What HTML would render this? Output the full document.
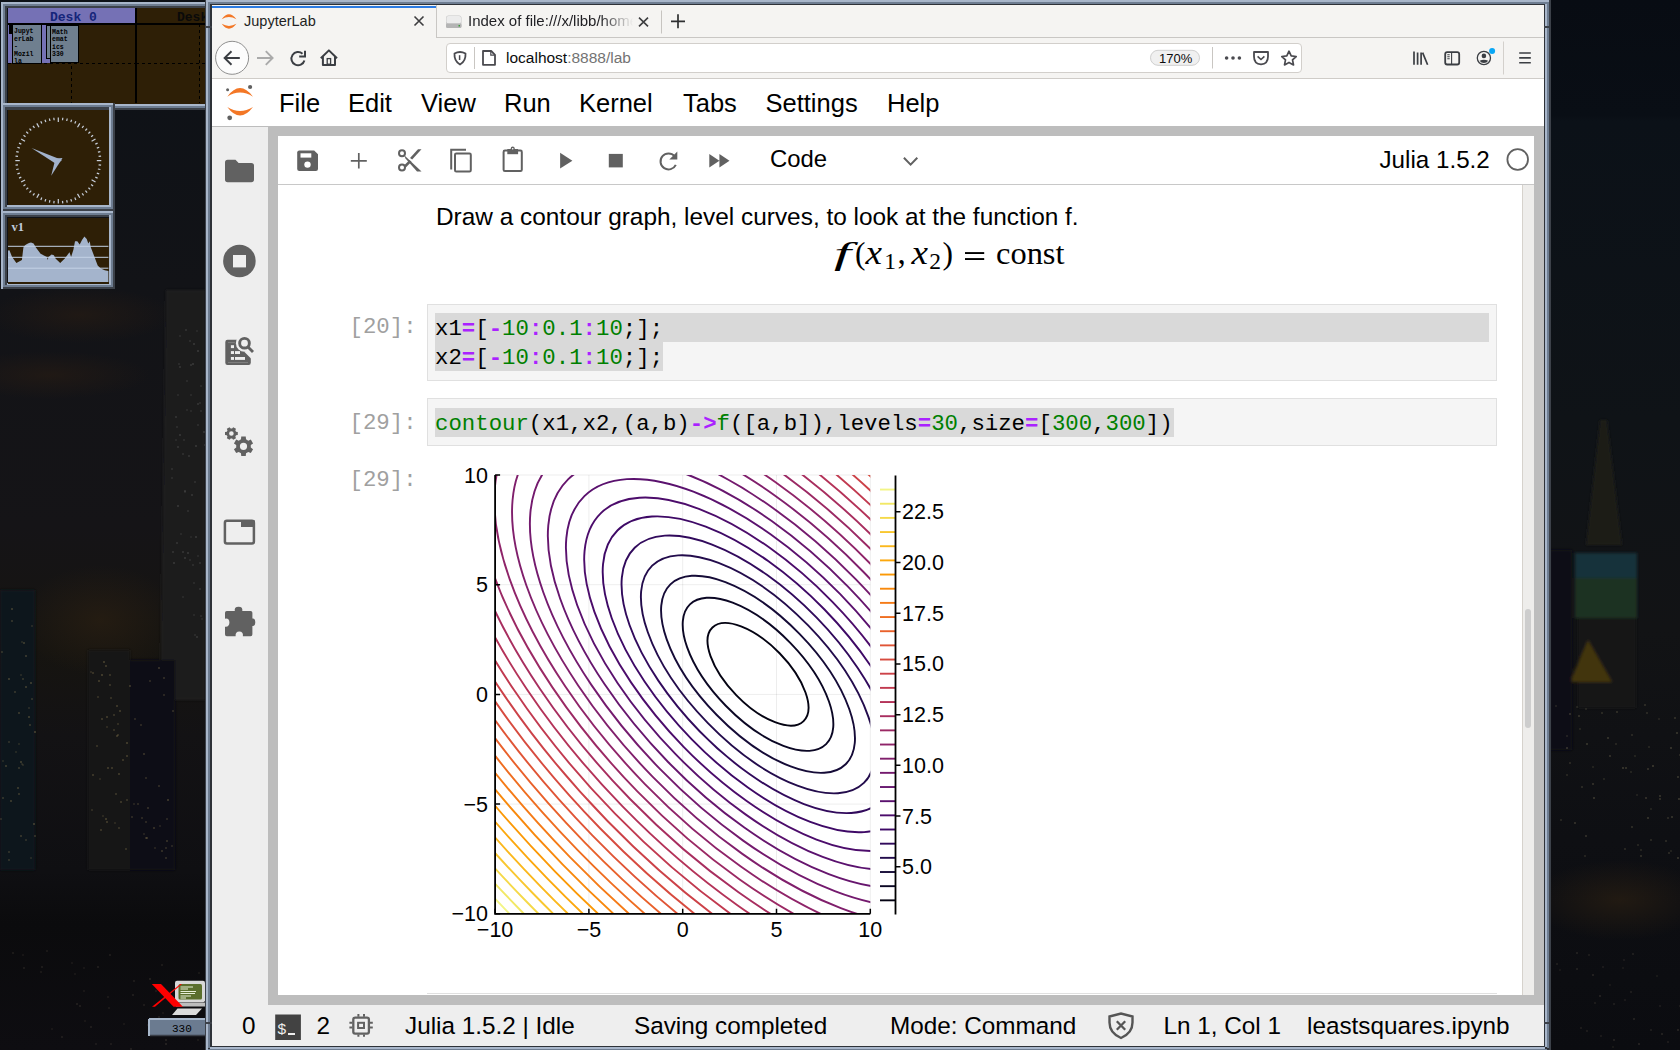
<!DOCTYPE html>
<html><head><meta charset="utf-8">
<style>
*{margin:0;padding:0;box-sizing:border-box}
html,body{width:1680px;height:1050px;overflow:hidden}
body{position:relative;background:#0b1016;font-family:"Liberation Sans",sans-serif}
.a{position:absolute}
.mono{font-family:"Liberation Mono",monospace}
</style></head><body>
<!-- desktop background -->
<svg class="a" style="left:0;top:0" width="1680" height="1050" viewBox="0 0 1680 1050">
 <defs>
  <linearGradient id="gl" x1="0" y1="0" x2="0" y2="1">
   <stop offset="0" stop-color="#0d1117"/><stop offset="0.27" stop-color="#121317"/><stop offset="0.5" stop-color="#151417"/>
   <stop offset="0.62" stop-color="#161410"/><stop offset="0.7" stop-color="#131214"/><stop offset="0.83" stop-color="#0f0f12"/><stop offset="0.88" stop-color="#0b0b0d"/><stop offset="1" stop-color="#0e0d11"/>
  </linearGradient>
  <linearGradient id="gr" x1="0" y1="0" x2="0" y2="1">
   <stop offset="0" stop-color="#080c13"/><stop offset="0.11" stop-color="#090e15"/><stop offset="0.115" stop-color="#0b1118"/>
   <stop offset="0.4" stop-color="#0f1317"/><stop offset="0.6" stop-color="#121315"/><stop offset="0.8" stop-color="#0e0f13"/><stop offset="1" stop-color="#0b0c10"/>
  </linearGradient>
  <filter id="bl" x="-50%" y="-50%" width="200%" height="200%"><feGaussianBlur stdDeviation="10"/></filter>
  <filter id="bl2" x="-50%" y="-50%" width="200%" height="200%"><feGaussianBlur stdDeviation="1.5"/></filter>
 </defs>
 <rect x="0" y="0" width="210" height="1050" fill="url(#gl)"/>
 <rect x="1545" y="0" width="135" height="1050" fill="url(#gr)"/>
 <defs>
  <radialGradient id="rb1"><stop offset="0" stop-color="#231a14" stop-opacity="0.8"/><stop offset="1" stop-color="#231a14" stop-opacity="0"/></radialGradient>
  <radialGradient id="rb2"><stop offset="0" stop-color="#2a1f12" stop-opacity="0.7"/><stop offset="1" stop-color="#2a1f12" stop-opacity="0"/></radialGradient>
 </defs>
 <ellipse cx="80" cy="315" rx="95" ry="28" fill="url(#rb1)"/>
 <ellipse cx="50" cy="375" rx="100" ry="24" fill="url(#rb1)"/>
 <ellipse cx="100" cy="620" rx="80" ry="55" fill="url(#rb2)"/>
 <ellipse cx="1620" cy="900" rx="90" ry="40" fill="url(#rb2)"/>
 <g filter="url(#bl2)">
  <path d="M166 290L205 290L205 700L160 700Z" fill="#1c1c1f"/>
  <rect x="0" y="590" width="35" height="280" fill="#10121a"/>
  <rect x="88" y="650" width="42" height="220" fill="#131317"/>
  <rect x="130" y="660" width="45" height="210" fill="#111116"/>
  <path d="M1600 420L1607 420L1622 545L1586 545Z" fill="#1b1c19"/>
  <rect x="1575" y="553" width="62" height="25" fill="#15323b"/>
  <rect x="1575" y="578" width="62" height="40" fill="#1a3020"/>
  <rect x="1578" y="618" width="58" height="90" fill="#141415"/>
  <path d="M1588 640L1612 682H1570Z" fill="#43360f"/>
  <rect x="1550" y="550" width="22" height="200" fill="#0b0d14"/>
 </g>
 <rect x="8" y="741" width="2" height="2" fill="#8a7a50" opacity="0.24"/>
 <rect x="21" y="763" width="2" height="2" fill="#8a7a50" opacity="0.19"/>
 <rect x="0" y="818" width="2" height="2" fill="#8a7a50" opacity="0.22"/>
 <rect x="8" y="859" width="2" height="2" fill="#8a7a50" opacity="0.26"/>
 <rect x="29" y="724" width="2" height="2" fill="#8a7a50" opacity="0.29"/>
 <rect x="5" y="765" width="2" height="2" fill="#8a7a50" opacity="0.33"/>
 <rect x="18" y="793" width="2" height="2" fill="#8a7a50" opacity="0.29"/>
 <rect x="2" y="797" width="2" height="2" fill="#8a7a50" opacity="0.28"/>
 <rect x="11" y="608" width="2" height="2" fill="#8a7a50" opacity="0.33"/>
 <rect x="17" y="787" width="2" height="2" fill="#8a7a50" opacity="0.33"/>
 <rect x="25" y="839" width="2" height="2" fill="#8a7a50" opacity="0.24"/>
 <rect x="28" y="716" width="2" height="2" fill="#8a7a50" opacity="0.34"/>
 <rect x="31" y="625" width="2" height="2" fill="#8a7a50" opacity="0.20"/>
 <rect x="8" y="851" width="2" height="2" fill="#8a7a50" opacity="0.25"/>
 <rect x="22" y="678" width="2" height="2" fill="#8a7a50" opacity="0.26"/>
 <rect x="14" y="691" width="2" height="2" fill="#8a7a50" opacity="0.28"/>
 <rect x="20" y="835" width="2" height="2" fill="#8a7a50" opacity="0.29"/>
 <rect x="33" y="823" width="2" height="2" fill="#8a7a50" opacity="0.35"/>
 <rect x="23" y="642" width="2" height="2" fill="#8a7a50" opacity="0.33"/>
 <rect x="34" y="835" width="2" height="2" fill="#8a7a50" opacity="0.27"/>
 <rect x="25" y="655" width="2" height="2" fill="#8a7a50" opacity="0.32"/>
 <rect x="20" y="674" width="2" height="2" fill="#8a7a50" opacity="0.19"/>
 <rect x="30" y="857" width="2" height="2" fill="#8a7a50" opacity="0.19"/>
 <rect x="28" y="707" width="2" height="2" fill="#8a7a50" opacity="0.20"/>
 <rect x="10" y="800" width="2" height="2" fill="#8a7a50" opacity="0.33"/>
 <rect x="2" y="760" width="2" height="2" fill="#8a7a50" opacity="0.18"/>
 <rect x="25" y="686" width="2" height="2" fill="#8a7a50" opacity="0.33"/>
 <rect x="34" y="731" width="2" height="2" fill="#8a7a50" opacity="0.35"/>
 <rect x="11" y="620" width="2" height="2" fill="#8a7a50" opacity="0.28"/>
 <rect x="1" y="651" width="2" height="2" fill="#8a7a50" opacity="0.25"/>
 <rect x="21" y="641" width="2" height="2" fill="#8a7a50" opacity="0.18"/>
 <rect x="30" y="682" width="2" height="2" fill="#8a7a50" opacity="0.34"/>
 <rect x="31" y="698" width="2" height="2" fill="#8a7a50" opacity="0.26"/>
 <rect x="18" y="767" width="2" height="2" fill="#8a7a50" opacity="0.28"/>
 <rect x="20" y="761" width="2" height="2" fill="#8a7a50" opacity="0.34"/>
 <rect x="18" y="712" width="2" height="2" fill="#8a7a50" opacity="0.30"/>
 <rect x="8" y="678" width="2" height="2" fill="#8a7a50" opacity="0.35"/>
 <rect x="18" y="743" width="2" height="2" fill="#8a7a50" opacity="0.18"/>
 <rect x="15" y="751" width="2" height="2" fill="#8a7a50" opacity="0.18"/>
 <rect x="22" y="764" width="2" height="2" fill="#8a7a50" opacity="0.19"/>
 <rect x="143" y="753" width="2" height="2" fill="#8a7a50" opacity="0.29"/>
 <rect x="120" y="801" width="2" height="2" fill="#8a7a50" opacity="0.30"/>
 <rect x="92" y="672" width="2" height="2" fill="#8a7a50" opacity="0.29"/>
 <rect x="172" y="710" width="2" height="2" fill="#8a7a50" opacity="0.25"/>
 <rect x="140" y="724" width="2" height="2" fill="#8a7a50" opacity="0.24"/>
 <rect x="117" y="734" width="2" height="2" fill="#8a7a50" opacity="0.28"/>
 <rect x="116" y="735" width="2" height="2" fill="#8a7a50" opacity="0.31"/>
 <rect x="92" y="774" width="2" height="2" fill="#8a7a50" opacity="0.30"/>
 <rect x="116" y="705" width="2" height="2" fill="#8a7a50" opacity="0.32"/>
 <rect x="110" y="697" width="2" height="2" fill="#8a7a50" opacity="0.25"/>
 <rect x="149" y="680" width="2" height="2" fill="#8a7a50" opacity="0.23"/>
 <rect x="118" y="827" width="2" height="2" fill="#8a7a50" opacity="0.25"/>
 <rect x="163" y="694" width="2" height="2" fill="#8a7a50" opacity="0.23"/>
 <rect x="145" y="837" width="2" height="2" fill="#8a7a50" opacity="0.25"/>
 <rect x="109" y="684" width="2" height="2" fill="#8a7a50" opacity="0.27"/>
 <rect x="106" y="821" width="2" height="2" fill="#8a7a50" opacity="0.32"/>
 <rect x="106" y="716" width="2" height="2" fill="#8a7a50" opacity="0.32"/>
 <rect x="145" y="821" width="2" height="2" fill="#8a7a50" opacity="0.24"/>
 <rect x="101" y="718" width="2" height="2" fill="#8a7a50" opacity="0.31"/>
 <rect x="113" y="729" width="2" height="2" fill="#8a7a50" opacity="0.25"/>
 <rect x="126" y="742" width="2" height="2" fill="#8a7a50" opacity="0.34"/>
 <rect x="103" y="661" width="2" height="2" fill="#8a7a50" opacity="0.34"/>
 <rect x="165" y="857" width="2" height="2" fill="#8a7a50" opacity="0.25"/>
 <rect x="171" y="845" width="2" height="2" fill="#8a7a50" opacity="0.21"/>
 <rect x="153" y="827" width="2" height="2" fill="#8a7a50" opacity="0.29"/>
 <rect x="134" y="718" width="2" height="2" fill="#8a7a50" opacity="0.23"/>
 <rect x="109" y="674" width="2" height="2" fill="#8a7a50" opacity="0.28"/>
 <rect x="114" y="822" width="2" height="2" fill="#8a7a50" opacity="0.18"/>
 <rect x="167" y="799" width="2" height="2" fill="#8a7a50" opacity="0.34"/>
 <rect x="166" y="840" width="2" height="2" fill="#8a7a50" opacity="0.28"/>
 <rect x="91" y="809" width="2" height="2" fill="#8a7a50" opacity="0.21"/>
 <rect x="115" y="793" width="2" height="2" fill="#8a7a50" opacity="0.27"/>
 <rect x="125" y="848" width="2" height="2" fill="#8a7a50" opacity="0.28"/>
 <rect x="119" y="710" width="2" height="2" fill="#8a7a50" opacity="0.33"/>
 <rect x="131" y="816" width="2" height="2" fill="#8a7a50" opacity="0.24"/>
 <rect x="107" y="767" width="2" height="2" fill="#8a7a50" opacity="0.32"/>
 <rect x="105" y="818" width="2" height="2" fill="#8a7a50" opacity="0.34"/>
 <rect x="159" y="825" width="2" height="2" fill="#8a7a50" opacity="0.18"/>
 <rect x="143" y="833" width="2" height="2" fill="#8a7a50" opacity="0.18"/>
 <rect x="113" y="714" width="2" height="2" fill="#8a7a50" opacity="0.27"/>
 <rect x="126" y="755" width="2" height="2" fill="#8a7a50" opacity="0.31"/>
 <rect x="90" y="671" width="2" height="2" fill="#8a7a50" opacity="0.20"/>
 <rect x="101" y="674" width="2" height="2" fill="#8a7a50" opacity="0.35"/>
 <rect x="163" y="677" width="2" height="2" fill="#8a7a50" opacity="0.26"/>
 <rect x="117" y="723" width="2" height="2" fill="#8a7a50" opacity="0.24"/>
 <rect x="145" y="777" width="2" height="2" fill="#8a7a50" opacity="0.24"/>
 <rect x="106" y="726" width="2" height="2" fill="#8a7a50" opacity="0.20"/>
 <rect x="137" y="803" width="2" height="2" fill="#8a7a50" opacity="0.24"/>
 <rect x="97" y="696" width="2" height="2" fill="#8a7a50" opacity="0.24"/>
 <rect x="141" y="817" width="2" height="2" fill="#8a7a50" opacity="0.24"/>
 <rect x="158" y="785" width="2" height="2" fill="#8a7a50" opacity="0.25"/>
 <rect x="122" y="759" width="2" height="2" fill="#8a7a50" opacity="0.30"/>
 <rect x="126" y="799" width="2" height="2" fill="#8a7a50" opacity="0.26"/>
 <rect x="111" y="767" width="2" height="2" fill="#8a7a50" opacity="0.30"/>
 <rect x="96" y="745" width="2" height="2" fill="#8a7a50" opacity="0.25"/>
 <rect x="165" y="847" width="2" height="2" fill="#8a7a50" opacity="0.24"/>
 <rect x="166" y="818" width="2" height="2" fill="#8a7a50" opacity="0.22"/>
 <rect x="129" y="685" width="2" height="2" fill="#8a7a50" opacity="0.32"/>
 <rect x="146" y="837" width="2" height="2" fill="#8a7a50" opacity="0.31"/>
 <rect x="147" y="807" width="2" height="2" fill="#8a7a50" opacity="0.27"/>
 <rect x="99" y="778" width="2" height="2" fill="#8a7a50" opacity="0.18"/>
 <rect x="102" y="815" width="2" height="2" fill="#8a7a50" opacity="0.18"/>
 <rect x="98" y="680" width="2" height="2" fill="#8a7a50" opacity="0.33"/>
 <rect x="105" y="665" width="2" height="2" fill="#8a7a50" opacity="0.32"/>
 <rect x="100" y="829" width="2" height="2" fill="#8a7a50" opacity="0.29"/>
 <rect x="161" y="850" width="2" height="2" fill="#8a7a50" opacity="0.28"/>
 <rect x="158" y="667" width="2" height="2" fill="#8a7a50" opacity="0.31"/>
 <rect x="133" y="803" width="2" height="2" fill="#8a7a50" opacity="0.19"/>
 <rect x="154" y="847" width="2" height="2" fill="#8a7a50" opacity="0.19"/>
 <rect x="118" y="773" width="2" height="2" fill="#8a7a50" opacity="0.32"/>
 <rect x="178" y="363" width="2" height="2" fill="#6a6a6a" opacity="0.19"/>
 <rect x="192" y="564" width="2" height="2" fill="#6a6a6a" opacity="0.21"/>
 <rect x="183" y="439" width="2" height="2" fill="#6a6a6a" opacity="0.20"/>
 <rect x="185" y="329" width="2" height="2" fill="#6a6a6a" opacity="0.23"/>
 <rect x="204" y="444" width="2" height="2" fill="#6a6a6a" opacity="0.26"/>
 <rect x="176" y="542" width="2" height="2" fill="#6a6a6a" opacity="0.26"/>
 <rect x="194" y="481" width="2" height="2" fill="#6a6a6a" opacity="0.22"/>
 <rect x="193" y="614" width="2" height="2" fill="#6a6a6a" opacity="0.17"/>
 <rect x="173" y="562" width="2" height="2" fill="#6a6a6a" opacity="0.29"/>
 <rect x="188" y="455" width="2" height="2" fill="#6a6a6a" opacity="0.26"/>
 <rect x="177" y="394" width="2" height="2" fill="#6a6a6a" opacity="0.18"/>
 <rect x="190" y="410" width="2" height="2" fill="#6a6a6a" opacity="0.18"/>
 <rect x="194" y="634" width="2" height="2" fill="#6a6a6a" opacity="0.19"/>
 <rect x="195" y="445" width="2" height="2" fill="#6a6a6a" opacity="0.28"/>
 <rect x="190" y="394" width="2" height="2" fill="#6a6a6a" opacity="0.18"/>
 <rect x="171" y="468" width="2" height="2" fill="#6a6a6a" opacity="0.21"/>
 <rect x="176" y="426" width="2" height="2" fill="#6a6a6a" opacity="0.20"/>
 <rect x="197" y="350" width="2" height="2" fill="#6a6a6a" opacity="0.30"/>
 <rect x="187" y="510" width="2" height="2" fill="#6a6a6a" opacity="0.22"/>
 <rect x="199" y="588" width="2" height="2" fill="#6a6a6a" opacity="0.23"/>
 <rect x="187" y="552" width="2" height="2" fill="#6a6a6a" opacity="0.28"/>
 <rect x="184" y="557" width="2" height="2" fill="#6a6a6a" opacity="0.29"/>
 <rect x="186" y="380" width="2" height="2" fill="#6a6a6a" opacity="0.19"/>
 <rect x="195" y="536" width="2" height="2" fill="#6a6a6a" opacity="0.29"/>
 <rect x="200" y="385" width="2" height="2" fill="#6a6a6a" opacity="0.18"/>
 <rect x="179" y="366" width="2" height="2" fill="#6a6a6a" opacity="0.26"/>
 <rect x="200" y="615" width="2" height="2" fill="#6a6a6a" opacity="0.19"/>
 <rect x="200" y="410" width="2" height="2" fill="#6a6a6a" opacity="0.21"/>
 <rect x="196" y="330" width="2" height="2" fill="#6a6a6a" opacity="0.16"/>
 <rect x="199" y="402" width="2" height="2" fill="#6a6a6a" opacity="0.20"/>
 <rect x="190" y="536" width="2" height="2" fill="#6a6a6a" opacity="0.15"/>
 <rect x="182" y="453" width="2" height="2" fill="#6a6a6a" opacity="0.22"/>
 <rect x="177" y="505" width="2" height="2" fill="#6a6a6a" opacity="0.29"/>
 <rect x="184" y="491" width="2" height="2" fill="#6a6a6a" opacity="0.17"/>
 <rect x="180" y="533" width="2" height="2" fill="#6a6a6a" opacity="0.17"/>
 <rect x="201" y="618" width="2" height="2" fill="#6a6a6a" opacity="0.16"/>
 <rect x="203" y="431" width="2" height="2" fill="#6a6a6a" opacity="0.27"/>
 <rect x="197" y="403" width="2" height="2" fill="#6a6a6a" opacity="0.25"/>
 <rect x="193" y="582" width="2" height="2" fill="#6a6a6a" opacity="0.19"/>
 <rect x="196" y="636" width="2" height="2" fill="#6a6a6a" opacity="0.25"/>
 <rect x="189" y="340" width="2" height="2" fill="#6a6a6a" opacity="0.22"/>
 <rect x="182" y="551" width="2" height="2" fill="#6a6a6a" opacity="0.25"/>
 <rect x="190" y="364" width="2" height="2" fill="#6a6a6a" opacity="0.25"/>
 <rect x="192" y="363" width="2" height="2" fill="#6a6a6a" opacity="0.28"/>
 <rect x="193" y="343" width="2" height="2" fill="#6a6a6a" opacity="0.29"/>
 <rect x="175" y="416" width="2" height="2" fill="#6a6a6a" opacity="0.26"/>
 <rect x="191" y="494" width="2" height="2" fill="#6a6a6a" opacity="0.25"/>
 <rect x="186" y="409" width="2" height="2" fill="#6a6a6a" opacity="0.18"/>
 <rect x="172" y="551" width="2" height="2" fill="#6a6a6a" opacity="0.26"/>
 <rect x="189" y="559" width="2" height="2" fill="#6a6a6a" opacity="0.20"/>
 <rect x="179" y="434" width="2" height="2" fill="#6a6a6a" opacity="0.28"/>
 <rect x="171" y="477" width="2" height="2" fill="#6a6a6a" opacity="0.19"/>
 <rect x="197" y="424" width="2" height="2" fill="#6a6a6a" opacity="0.20"/>
 <rect x="184" y="490" width="2" height="2" fill="#6a6a6a" opacity="0.27"/>
 <rect x="182" y="596" width="2" height="2" fill="#6a6a6a" opacity="0.17"/>
 <rect x="179" y="335" width="2" height="2" fill="#6a6a6a" opacity="0.17"/>
 <rect x="197" y="555" width="2" height="2" fill="#6a6a6a" opacity="0.18"/>
 <rect x="177" y="446" width="2" height="2" fill="#6a6a6a" opacity="0.26"/>
 <rect x="199" y="562" width="2" height="2" fill="#6a6a6a" opacity="0.24"/>
 <rect x="175" y="439" width="2" height="2" fill="#6a6a6a" opacity="0.18"/>
 <rect x="108" y="1007" width="2" height="2" fill="#6a6050" opacity="0.15"/>
 <rect x="51" y="1028" width="2" height="2" fill="#6a6050" opacity="0.13"/>
 <rect x="165" y="1039" width="2" height="2" fill="#6a6050" opacity="0.24"/>
 <rect x="79" y="1005" width="2" height="2" fill="#6a6050" opacity="0.20"/>
 <rect x="130" y="1048" width="2" height="2" fill="#6a6050" opacity="0.21"/>
 <rect x="61" y="1036" width="2" height="2" fill="#6a6050" opacity="0.19"/>
 <rect x="123" y="1023" width="2" height="2" fill="#6a6050" opacity="0.13"/>
 <rect x="158" y="1016" width="2" height="2" fill="#6a6050" opacity="0.19"/>
 <rect x="107" y="996" width="2" height="2" fill="#6a6050" opacity="0.15"/>
 <rect x="109" y="954" width="2" height="2" fill="#6a6050" opacity="0.19"/>
 <rect x="132" y="994" width="2" height="2" fill="#6a6050" opacity="0.20"/>
 <rect x="197" y="1039" width="2" height="2" fill="#6a6050" opacity="0.14"/>
 <rect x="162" y="1012" width="2" height="2" fill="#6a6050" opacity="0.13"/>
 <rect x="74" y="973" width="2" height="2" fill="#6a6050" opacity="0.13"/>
 <rect x="110" y="1043" width="2" height="2" fill="#6a6050" opacity="0.17"/>
 <rect x="178" y="1019" width="2" height="2" fill="#6a6050" opacity="0.14"/>
 <rect x="176" y="1010" width="2" height="2" fill="#6a6050" opacity="0.24"/>
 <rect x="147" y="1024" width="2" height="2" fill="#6a6050" opacity="0.17"/>
 <rect x="165" y="1043" width="2" height="2" fill="#6a6050" opacity="0.23"/>
 <rect x="90" y="1026" width="2" height="2" fill="#6a6050" opacity="0.19"/>
 <rect x="22" y="954" width="2" height="2" fill="#6a6050" opacity="0.13"/>
 <rect x="41" y="966" width="2" height="2" fill="#6a6050" opacity="0.19"/>
 <rect x="143" y="1004" width="2" height="2" fill="#6a6050" opacity="0.18"/>
 <rect x="133" y="980" width="2" height="2" fill="#6a6050" opacity="0.18"/>
 <rect x="155" y="990" width="2" height="2" fill="#6a6050" opacity="0.15"/>
 <rect x="184" y="1022" width="2" height="2" fill="#6a6050" opacity="0.17"/>
 <rect x="76" y="1003" width="2" height="2" fill="#6a6050" opacity="0.20"/>
 <rect x="46" y="950" width="2" height="2" fill="#6a6050" opacity="0.15"/>
 <rect x="161" y="964" width="2" height="2" fill="#6a6050" opacity="0.18"/>
 <rect x="40" y="971" width="2" height="2" fill="#6a6050" opacity="0.15"/>
 <rect x="83" y="967" width="2" height="2" fill="#6a6050" opacity="0.13"/>
 <rect x="23" y="967" width="2" height="2" fill="#6a6050" opacity="0.19"/>
 <rect x="12" y="952" width="2" height="2" fill="#6a6050" opacity="0.18"/>
 <rect x="84" y="1020" width="2" height="2" fill="#6a6050" opacity="0.13"/>
 <rect x="83" y="990" width="2" height="2" fill="#6a6050" opacity="0.13"/>
 <rect x="198" y="972" width="2" height="2" fill="#6a6050" opacity="0.14"/>
 <rect x="97" y="966" width="2" height="2" fill="#6a6050" opacity="0.20"/>
 <rect x="71" y="962" width="2" height="2" fill="#6a6050" opacity="0.13"/>
 <rect x="149" y="978" width="2" height="2" fill="#6a6050" opacity="0.22"/>
 <rect x="95" y="1043" width="2" height="2" fill="#6a6050" opacity="0.16"/>
 <rect x="1586" y="743" width="2" height="2" fill="#8a8060" opacity="0.27"/>
 <rect x="1634" y="755" width="2" height="2" fill="#8a8060" opacity="0.16"/>
 <rect x="1640" y="855" width="2" height="2" fill="#8a8060" opacity="0.24"/>
 <rect x="1555" y="705" width="2" height="2" fill="#8a8060" opacity="0.16"/>
 <rect x="1576" y="706" width="2" height="2" fill="#8a8060" opacity="0.16"/>
 <rect x="1637" y="844" width="2" height="2" fill="#8a8060" opacity="0.18"/>
 <rect x="1677" y="776" width="2" height="2" fill="#8a8060" opacity="0.27"/>
 <rect x="1670" y="850" width="2" height="2" fill="#8a8060" opacity="0.16"/>
 <rect x="1593" y="797" width="2" height="2" fill="#8a8060" opacity="0.29"/>
 <rect x="1566" y="747" width="2" height="2" fill="#8a8060" opacity="0.28"/>
 <rect x="1569" y="762" width="2" height="2" fill="#8a8060" opacity="0.20"/>
 <rect x="1640" y="849" width="2" height="2" fill="#8a8060" opacity="0.18"/>
 <rect x="1647" y="817" width="2" height="2" fill="#8a8060" opacity="0.28"/>
 <rect x="1624" y="848" width="2" height="2" fill="#8a8060" opacity="0.20"/>
 <rect x="1607" y="737" width="2" height="2" fill="#8a8060" opacity="0.27"/>
 <rect x="1615" y="743" width="2" height="2" fill="#8a8060" opacity="0.18"/>
 <rect x="1645" y="797" width="2" height="2" fill="#8a8060" opacity="0.26"/>
 <rect x="1603" y="778" width="2" height="2" fill="#8a8060" opacity="0.17"/>
 <rect x="1644" y="704" width="2" height="2" fill="#8a8060" opacity="0.22"/>
 <rect x="1650" y="808" width="2" height="2" fill="#8a8060" opacity="0.16"/>
 <rect x="1585" y="835" width="2" height="2" fill="#8a8060" opacity="0.25"/>
 <rect x="1665" y="840" width="2" height="2" fill="#8a8060" opacity="0.22"/>
 <rect x="1667" y="817" width="2" height="2" fill="#8a8060" opacity="0.20"/>
 <rect x="1601" y="712" width="2" height="2" fill="#8a8060" opacity="0.21"/>
 <rect x="1674" y="717" width="2" height="2" fill="#8a8060" opacity="0.24"/>
 <rect x="1569" y="713" width="2" height="2" fill="#8a8060" opacity="0.25"/>
 <rect x="1585" y="708" width="2" height="2" fill="#8a8060" opacity="0.17"/>
 <rect x="1636" y="794" width="2" height="2" fill="#8a8060" opacity="0.15"/>
 <rect x="1584" y="855" width="2" height="2" fill="#8a8060" opacity="0.18"/>
 <rect x="1625" y="767" width="2" height="2" fill="#8a8060" opacity="0.27"/>
 <rect x="1631" y="826" width="2" height="2" fill="#8a8060" opacity="0.23"/>
 <rect x="1579" y="728" width="2" height="2" fill="#8a8060" opacity="0.16"/>
 <rect x="1658" y="718" width="2" height="2" fill="#8a8060" opacity="0.15"/>
 <rect x="1676" y="732" width="2" height="2" fill="#8a8060" opacity="0.28"/>
 <rect x="1566" y="774" width="2" height="2" fill="#8a8060" opacity="0.18"/>
 <rect x="1659" y="798" width="2" height="2" fill="#8a8060" opacity="0.25"/>
 <rect x="1650" y="839" width="2" height="2" fill="#8a8060" opacity="0.20"/>
 <rect x="1630" y="771" width="2" height="2" fill="#8a8060" opacity="0.17"/>
 <rect x="1659" y="795" width="2" height="2" fill="#8a8060" opacity="0.27"/>
 <rect x="1581" y="786" width="2" height="2" fill="#8a8060" opacity="0.22"/>
 <rect x="1646" y="712" width="2" height="2" fill="#8a8060" opacity="0.20"/>
 <rect x="1616" y="711" width="2" height="2" fill="#8a8060" opacity="0.23"/>
 <rect x="1647" y="768" width="2" height="2" fill="#8a8060" opacity="0.25"/>
 <rect x="1631" y="734" width="2" height="2" fill="#8a8060" opacity="0.20"/>
 <rect x="1679" y="754" width="2" height="2" fill="#8a8060" opacity="0.21"/>
 <rect x="1566" y="735" width="2" height="2" fill="#8a8060" opacity="0.17"/>
 <rect x="1671" y="816" width="2" height="2" fill="#8a8060" opacity="0.28"/>
 <rect x="1678" y="798" width="2" height="2" fill="#8a8060" opacity="0.29"/>
 <rect x="1622" y="767" width="2" height="2" fill="#8a8060" opacity="0.29"/>
 <rect x="1668" y="852" width="2" height="2" fill="#8a8060" opacity="0.22"/>
 <rect x="1652" y="765" width="2" height="2" fill="#8a8060" opacity="0.30"/>
 <rect x="1670" y="747" width="2" height="2" fill="#8a8060" opacity="0.29"/>
 <rect x="1578" y="715" width="2" height="2" fill="#8a8060" opacity="0.26"/>
 <rect x="1592" y="783" width="2" height="2" fill="#8a8060" opacity="0.25"/>
 <rect x="1560" y="819" width="2" height="2" fill="#8a8060" opacity="0.19"/>
 <rect x="1609" y="755" width="2" height="2" fill="#8a8060" opacity="0.26"/>
 <rect x="1648" y="746" width="2" height="2" fill="#8a8060" opacity="0.17"/>
 <rect x="1592" y="766" width="2" height="2" fill="#8a8060" opacity="0.16"/>
 <rect x="1574" y="822" width="2" height="2" fill="#8a8060" opacity="0.26"/>
 <rect x="1677" y="857" width="2" height="2" fill="#8a8060" opacity="0.28"/>
 <rect x="1602" y="966" width="2" height="2" fill="#6a6050" opacity="0.16"/>
 <rect x="1613" y="1003" width="2" height="2" fill="#6a6050" opacity="0.19"/>
 <rect x="1600" y="1035" width="2" height="2" fill="#6a6050" opacity="0.16"/>
 <rect x="1613" y="1039" width="2" height="2" fill="#6a6050" opacity="0.23"/>
 <rect x="1592" y="974" width="2" height="2" fill="#6a6050" opacity="0.23"/>
 <rect x="1556" y="963" width="2" height="2" fill="#6a6050" opacity="0.19"/>
 <rect x="1622" y="967" width="2" height="2" fill="#6a6050" opacity="0.13"/>
 <rect x="1580" y="1027" width="2" height="2" fill="#6a6050" opacity="0.18"/>
 <rect x="1677" y="1029" width="2" height="2" fill="#6a6050" opacity="0.25"/>
 <rect x="1559" y="969" width="2" height="2" fill="#6a6050" opacity="0.13"/>
 <rect x="1609" y="984" width="2" height="2" fill="#6a6050" opacity="0.13"/>
 <rect x="1623" y="959" width="2" height="2" fill="#6a6050" opacity="0.16"/>
 <rect x="1586" y="1030" width="2" height="2" fill="#6a6050" opacity="0.18"/>
 <rect x="1588" y="954" width="2" height="2" fill="#6a6050" opacity="0.18"/>
 <rect x="1633" y="1018" width="2" height="2" fill="#6a6050" opacity="0.24"/>
 <rect x="1656" y="975" width="2" height="2" fill="#6a6050" opacity="0.14"/>
 <rect x="1650" y="1029" width="2" height="2" fill="#6a6050" opacity="0.19"/>
 <rect x="1659" y="1005" width="2" height="2" fill="#6a6050" opacity="0.16"/>
 <rect x="1576" y="952" width="2" height="2" fill="#6a6050" opacity="0.21"/>
 <rect x="1667" y="1041" width="2" height="2" fill="#6a6050" opacity="0.18"/>
 <rect x="1638" y="1043" width="2" height="2" fill="#6a6050" opacity="0.23"/>
 <rect x="1630" y="991" width="2" height="2" fill="#6a6050" opacity="0.19"/>
 <rect x="1576" y="968" width="2" height="2" fill="#6a6050" opacity="0.21"/>
 <rect x="1679" y="1005" width="2" height="2" fill="#6a6050" opacity="0.18"/>
 <rect x="1599" y="995" width="2" height="2" fill="#6a6050" opacity="0.23"/>
 <rect x="1612" y="1046" width="2" height="2" fill="#6a6050" opacity="0.14"/>
 <rect x="1594" y="1002" width="2" height="2" fill="#6a6050" opacity="0.18"/>
 <rect x="1661" y="1033" width="2" height="2" fill="#6a6050" opacity="0.24"/>
 <rect x="1632" y="953" width="2" height="2" fill="#6a6050" opacity="0.20"/>
 <rect x="1624" y="999" width="2" height="2" fill="#6a6050" opacity="0.16"/>
</svg>

<!-- pager -->
<svg class="a" style="left:0;top:0" width="212" height="292" viewBox="0 0 212 292" font-family="Liberation Mono" shape-rendering="crispEdges">
 <!-- pager frame -->
 <rect x="1" y="2" width="211" height="2" fill="#a8b6ca"/>
 <rect x="3" y="4" width="207" height="2" fill="#6e7d91"/>
 <rect x="5" y="6" width="203" height="2" fill="#3c4149"/>
 <rect x="5" y="104" width="203" height="2" fill="#a8b6ca"/>
 <rect x="3" y="106" width="207" height="2" fill="#6e7d91"/>
 <rect x="1" y="108" width="211" height="2" fill="#3c4149"/>
 <rect x="1" y="2" width="2" height="108" fill="#a8b6ca"/>
 <rect x="3" y="4" width="2" height="104" fill="#6e7d91"/>
 <rect x="5" y="6" width="2" height="100" fill="#3c4149"/>
 <rect x="206" y="6" width="2" height="100" fill="#a8b6ca"/>
 <rect x="208" y="4" width="2" height="104" fill="#6e7d91"/>
 <rect x="210" y="2" width="2" height="108" fill="#3c4149"/>
 <rect x="8" y="8" width="198" height="95.5" fill="#2e1f06"/>
 <rect x="8" y="8" width="127" height="15" fill="#7571b5"/>
 <text x="50" y="20.5" font-size="13" font-weight="bold" fill="#15257a">Desk 0</text>
 <text x="177" y="20.5" font-size="13" font-weight="bold" fill="#0a0a0a">Desk</text>
 <rect x="8" y="23" width="198" height="1.5" fill="#000"/>
 <rect x="135" y="8" width="1.5" height="95" fill="#000"/>
 <path d="M8 63.5H135M136 63.5H206M71 24V103M199.5 24V103" stroke="#000" stroke-width="1" stroke-dasharray="3 3" fill="none"/>
 <rect x="8" y="24.5" width="52" height="38.5" fill="#7571b5"/>
 <rect x="12.5" y="24.5" width="29" height="38.5" fill="#6f7f8f" stroke="#000" stroke-width="1"/>
 <rect x="8.5" y="25" width="4" height="9" fill="#000"/>
 <rect x="46" y="25.5" width="5" height="33" fill="#6f7f8f" stroke="#000" stroke-width="1"/>
 <rect x="50" y="25.6" width="28.5" height="37" fill="#6f7f8f" stroke="#000" stroke-width="1"/>
 <g font-size="6.5" fill="#000" font-weight="bold">
  <text x="14" y="33">Jupyt</text><text x="14" y="40.5">erLab</text><text x="14" y="48"> -</text><text x="14" y="55.5">Mozil</text><text x="14" y="63">la</text>
  <text x="52" y="33.5">Math</text><text x="52" y="41">emat</text><text x="52" y="48.5">ics</text><text x="52" y="56">330</text>
 </g>
 <rect x="1" y="103" width="114" height="2" fill="#a8b6ca"/>
 <rect x="3" y="105" width="110" height="2" fill="#6e7d91"/>
 <rect x="5" y="107" width="106" height="2" fill="#3c4149"/>
 <rect x="5" y="205" width="106" height="2" fill="#a8b6ca"/>
 <rect x="3" y="207" width="110" height="2" fill="#6e7d91"/>
 <rect x="1" y="209" width="114" height="2" fill="#3c4149"/>
 <rect x="1" y="103" width="2" height="108" fill="#a8b6ca"/>
 <rect x="3" y="105" width="2" height="104" fill="#6e7d91"/>
 <rect x="5" y="107" width="2" height="100" fill="#3c4149"/>
 <rect x="109" y="107" width="2" height="100" fill="#a8b6ca"/>
 <rect x="111" y="105" width="2" height="104" fill="#6e7d91"/>
 <rect x="113" y="103" width="2" height="108" fill="#3c4149"/>
 <rect x="7.5" y="109.5" width="101.5" height="95.5" fill="#2e1f06"/>
 <rect x="1" y="211" width="114" height="2" fill="#a8b6ca"/>
 <rect x="3" y="213" width="110" height="2" fill="#6e7d91"/>
 <rect x="5" y="215" width="106" height="2" fill="#3c4149"/>
 <rect x="5" y="283" width="106" height="2" fill="#a8b6ca"/>
 <rect x="3" y="285" width="110" height="2" fill="#6e7d91"/>
 <rect x="1" y="287" width="114" height="2" fill="#3c4149"/>
 <rect x="1" y="211" width="2" height="78" fill="#a8b6ca"/>
 <rect x="3" y="213" width="2" height="74" fill="#6e7d91"/>
 <rect x="5" y="215" width="2" height="70" fill="#3c4149"/>
 <rect x="109" y="215" width="2" height="70" fill="#a8b6ca"/>
 <rect x="111" y="213" width="2" height="74" fill="#6e7d91"/>
 <rect x="113" y="211" width="2" height="78" fill="#3c4149"/>
 <rect x="7.5" y="217.5" width="101.5" height="66" fill="#2e1f06"/>
</svg>
<svg class="a" style="left:0;top:100px" width="120" height="190" viewBox="0 100 120 190">
 <g id="ticks" stroke="#c8d0dc" stroke-width="1.2">
 <path d="M58.3 122.1L58.3 117.6"/>
 <path d="M62.5 120.3L62.8 117.8"/>
 <path d="M66.7 121.0L67.2 118.5"/>
 <path d="M70.8 122.1L71.6 119.7"/>
 <path d="M74.8 123.6L75.8 121.3"/>
 <path d="M77.5 127.3L79.8 123.4"/>
 <path d="M82.1 127.8L83.6 125.8"/>
 <path d="M85.4 130.5L87.1 128.6"/>
 <path d="M88.4 133.5L90.3 131.8"/>
 <path d="M91.1 136.8L93.1 135.3"/>
 <path d="M91.6 141.3L95.5 139.1"/>
 <path d="M95.3 144.1L97.6 143.1"/>
 <path d="M96.8 148.1L99.2 147.3"/>
 <path d="M97.9 152.2L100.4 151.7"/>
 <path d="M98.6 156.4L101.1 156.1"/>
 <path d="M96.8 160.6L101.3 160.6"/>
 <path d="M98.6 164.8L101.1 165.1"/>
 <path d="M97.9 169.0L100.4 169.5"/>
 <path d="M96.8 173.1L99.2 173.9"/>
 <path d="M95.3 177.1L97.6 178.1"/>
 <path d="M91.6 179.8L95.5 182.1"/>
 <path d="M91.1 184.4L93.1 185.9"/>
 <path d="M88.4 187.7L90.3 189.4"/>
 <path d="M85.4 190.7L87.1 192.6"/>
 <path d="M82.1 193.4L83.6 195.4"/>
 <path d="M77.5 193.9L79.8 197.8"/>
 <path d="M74.8 197.6L75.8 199.9"/>
 <path d="M70.8 199.1L71.6 201.5"/>
 <path d="M66.7 200.2L67.2 202.7"/>
 <path d="M62.5 200.9L62.8 203.4"/>
 <path d="M58.3 199.1L58.3 203.6"/>
 <path d="M54.1 200.9L53.8 203.4"/>
 <path d="M49.9 200.2L49.4 202.7"/>
 <path d="M45.8 199.1L45.0 201.5"/>
 <path d="M41.8 197.6L40.8 199.9"/>
 <path d="M39.0 193.9L36.8 197.8"/>
 <path d="M34.5 193.4L33.0 195.4"/>
 <path d="M31.2 190.7L29.5 192.6"/>
 <path d="M28.2 187.7L26.3 189.4"/>
 <path d="M25.5 184.4L23.5 185.9"/>
 <path d="M25.0 179.9L21.1 182.1"/>
 <path d="M21.3 177.1L19.0 178.1"/>
 <path d="M19.8 173.1L17.4 173.9"/>
 <path d="M18.7 169.0L16.2 169.5"/>
 <path d="M18.0 164.8L15.5 165.1"/>
 <path d="M19.8 160.6L15.3 160.6"/>
 <path d="M18.0 156.4L15.5 156.1"/>
 <path d="M18.7 152.2L16.2 151.7"/>
 <path d="M19.8 148.1L17.4 147.3"/>
 <path d="M21.3 144.1L19.0 143.1"/>
 <path d="M25.0 141.3L21.1 139.1"/>
 <path d="M25.5 136.8L23.5 135.3"/>
 <path d="M28.2 133.5L26.3 131.8"/>
 <path d="M31.2 130.5L29.5 128.6"/>
 <path d="M34.5 127.8L33.0 125.8"/>
 <path d="M39.0 127.3L36.8 123.4"/>
 <path d="M41.8 123.6L40.8 121.3"/>
 <path d="M45.8 122.1L45.0 119.7"/>
 <path d="M49.9 121.0L49.4 118.5"/>
 <path d="M54.1 120.3L53.8 117.8"/>
 </g>
 <path d="M62 160L31.5 148L57 164.5Z" fill="#a2b2cc"/>
 <path d="M62.5 158L51.2 175.8L55.5 158.5Z" fill="#a2b2cc"/>
 <path d="M8 282V250.6L8.2 250.6L9.4 250.2L12.1 256.9L16.4 263.1L21.9 260.0L23.4 247.5L25.0 245.2L27.0 244.0L29.0 243.0L31.0 242.5L33.6 243.6L35.9 247.5L40.6 253.8L46.9 256.9L47.7 260.0L48.5 257.0L51.6 254.5L53.9 255.3L55.5 258.4L60.2 263.1L64.8 258.4L69.5 252.2L71.1 256.9L73.4 249.8L75.0 241.2L77.3 241.2L79.7 244.4L82.0 240.0L84.4 236.6L86.7 238.9L88.3 243.6L89.8 241.2L90.6 246.7L94.5 256.9L97.7 265.5L100.8 268.6L104.7 270.2L108.4 271.0V282Z" fill="#a4b4cc"/>
 <path d="M8 246.3H108.4M8 257.3H108.4M8 268.2H108.4" stroke="#c4d2e6" stroke-width="1"/>
 <text x="11.5" y="231.3" font-family="Liberation Serif" font-weight="bold" font-size="12.5" fill="#c0ccdc">v1</text>
</svg>
<!-- bottom-left icon -->
<svg class="a" style="left:145px;top:975px" width="62" height="65" viewBox="145 975 62 65">
 <rect x="175" y="980.7" width="30" height="21.5" rx="2" fill="#d8d8d8"/>
 <rect x="178.5" y="984" width="23.5" height="15.5" rx="1.5" fill="#5b6f2d"/>
 <path d="M180.5 987H193M180.5 989H188M180.5 991.5H196M180.5 993.5H195M180.5 996H191M180.5 998H186" stroke="#e8f0d8" stroke-width="1"/>
 <rect x="176" y="1002.5" width="29" height="4" fill="#bdbdbd"/>
 <path d="M172 1015L177.5 1008.5H202L196 1015Z" fill="#dcdcdc"/>
 <path d="M151.8 983.9H161L182.9 1006.8H173.5Z" fill="#ff0000"/>
 <path d="M180.5 984L152 1006.8H155L182 984Z" fill="#ff0000"/>
 <rect x="149" y="1019" width="56" height="17" fill="#6b7b90"/>
 <path d="M149 1019H205M149 1019V1036" stroke="#a8b8cc" stroke-width="2"/>
 <path d="M150 1035.5H205" stroke="#3a3f48" stroke-width="1.5"/>
 <text x="172" y="1031.5" font-family="Liberation Mono" font-size="11" fill="#000">330</text>
</svg>

<!-- browser frame -->
<svg class="a" style="left:0;top:0" width="1680" height="1050" viewBox="0 0 1680 1050" shape-rendering="crispEdges">
 <rect x="205" y="0" width="1346" height="1050" fill="#2e3238"/>
 <rect x="206" y="0" width="1344" height="2" fill="#a8b6ca"/>
 <rect x="208" y="2" width="1340" height="1.5" fill="#6e7d91"/>
 <rect x="205" y="0" width="1" height="1050" fill="#3c4149"/>
 <rect x="206" y="0" width="2" height="1050" fill="#a8b6ca"/>
 <rect x="208" y="2" width="2" height="1046" fill="#6e7d91"/>
 <rect x="1545" y="3.5" width="2" height="1043" fill="#a8b6ca"/>
 <rect x="1547" y="2" width="2" height="1046" fill="#6e7d91"/>
 <rect x="1549" y="0" width="2" height="1050" fill="#3c4149"/>
 <rect x="210" y="1047" width="1335" height="1.5" fill="#a8b6ca"/>
 <rect x="208" y="1048.5" width="1339" height="1.5" fill="#6e7d91"/>
 <path d="M205 27H212M1544 27H1551M205 1023H212M1544 1023H1551" stroke="#3c4149" stroke-width="1.5"/>
</svg>
<!-- firefox chrome -->
<div class="a" id="ff" style="left:212px;top:5px;width:1332px;height:1041px;background:#f5f4f2"></div>
<!-- tab strip -->
<div class="a" style="left:212px;top:6px;width:224px;height:2px;background:#2a7ae2"></div>
<div class="a" style="left:436px;top:5px;width:1108px;height:33px;border-left:1px solid #c9c7c4;border-bottom:1px solid #c9c7c4"></div>
<!-- urlbar -->
<div class="a" style="left:446px;top:43px;width:856px;height:30px;background:#fff;border:1px solid #d2cfcb;border-radius:4px"></div>
<div class="a" style="left:212px;top:78px;width:1332px;height:1px;background:#cfccc8"></div>

<!-- jupyter -->
<div class="a" id="jmenu" style="left:212px;top:79px;width:1332px;height:47px;background:#fff"></div>
<div class="a" style="left:212px;top:126px;width:1332px;height:1px;background:#bdbdbd"></div>
<div class="a" id="side" style="left:212px;top:127px;width:56px;height:878px;background:#eeeeee"></div>
<div class="a" id="gray" style="left:268px;top:127px;width:1276px;height:878px;background:#bdbdbd"></div>
<div class="a" id="tb" style="left:278px;top:136px;width:1256px;height:49px;background:#fff;border-bottom:1px solid #c8c8c8"></div>
<div class="a" id="nb" style="left:278px;top:185px;width:1256px;height:810px;background:#fff"></div>
<div class="a" id="sbtrack" style="left:1522px;top:185px;width:12px;height:810px;background:#eeedeb;border-left:1px solid #d6d2cc"></div>
<div class="a" style="left:1525px;top:609px;width:6.3px;height:119px;background:#cdcdcd;border-radius:3px"></div>
<div class="a" id="status" style="left:212px;top:1005px;width:1332px;height:41px;background:#eeeeee"></div>

<!-- tabs content -->
<svg class="a" style="left:212px;top:5px" width="1332" height="74" viewBox="212 5 1332 74">
 <path d="M221.7 19.2Q228.9 9.4 236.4 19.2Q228.9 14.9 221.7 19.2Z" fill="#f37726"/>
 <path d="M221.7 23.8Q228.9 33.6 236.4 23.8Q228.9 28.1 221.7 23.8Z" fill="#f37726"/>
 <path d="M414.5 16.5l9 9M423.5 16.5l-9 9" stroke="#3d3d3f" stroke-width="1.6"/>
 <!-- drive icon -->
 <rect x="446" y="15.5" width="15.5" height="12.5" rx="2.5" fill="#c8c8c8"/>
 <rect x="446.5" y="16" width="14.5" height="7.5" rx="2" fill="#ececec"/>
 <rect x="446" y="23.5" width="15.5" height="4.5" rx="1.5" fill="#b4b4b4"/>
 <rect x="458.5" y="25" width="1.5" height="1.5" fill="#3c9a3c"/>
 <path d="M639 17.7l9 8.6M648 17.7l-9 8.6" stroke="#3d3d3f" stroke-width="1.6"/>
 <path d="M661.5 10.5V33.5" stroke="#c7c4c0" stroke-width="1"/>
 <path d="M671 21.3H685M678 14.3V28.3" stroke="#2e2f31" stroke-width="1.7"/>
 <!-- nav -->
 <circle cx="232.1" cy="57.8" r="16.5" fill="#fcfcfc" stroke="#8f8f8f" stroke-width="1"/>
 <path d="M239.8 58H225.2M231.5 51.2L224.6 58L231.5 64.8" fill="none" stroke="#3b3e43" stroke-width="1.9"/>
 <path d="M257 58H272.6M265.8 51.2L272.6 58L265.8 64.8" fill="none" stroke="#aaaaaa" stroke-width="1.9"/>
 <path d="M302.5 53.8 A6.6 6.6 0 1 0 304.4 60.4" fill="none" stroke="#3b3e43" stroke-width="2"/>
 <path d="M305 50.8V56.6H299.2" fill="none" stroke="#3b3e43" stroke-width="2"/>
 <path d="M320.8 58.3L328.9 50.4L337 58.3M322.9 56.8V65H335V56.8" fill="none" stroke="#3b3e43" stroke-width="2" stroke-linejoin="round"/>
 <rect x="327.2" y="58.6" width="3.4" height="5.6" fill="none" stroke="#3b3e43" stroke-width="1.3"/>
 <!-- url bar icons -->
 <path d="M454.5 53.5 Q460 50.5 465.5 53.5 Q466 61 460 64.5 Q454 61 454.5 53.5Z" fill="none" stroke="#4a4a4f" stroke-width="1.8" stroke-linejoin="round"/>
 <path d="M459.6 55.2V60" stroke="#4a4a4f" stroke-width="1.5"/>
 <path d="M474.5 47V69" stroke="#c9c6c2" stroke-width="1"/>
 <path d="M483 51H491.2L495 54.8V64.8H483Z" fill="none" stroke="#4a4a4f" stroke-width="1.8" stroke-linejoin="round"/>
 <path d="M490.8 51.2V55.2H494.8" fill="none" stroke="#4a4a4f" stroke-width="1.2"/>
 <rect x="1150.5" y="50.3" width="49" height="15" rx="7.5" fill="#f0f0f0" stroke="#cfcfcf" stroke-width="1"/>
 <path d="M1212.5 47V68.5" stroke="#c9c6c2" stroke-width="1"/>
 <circle cx="1226.6" cy="58" r="1.8" fill="#4a4a4f"/><circle cx="1233" cy="58" r="1.8" fill="#4a4a4f"/><circle cx="1239.4" cy="58" r="1.8" fill="#4a4a4f"/>
 <path d="M1254 52H1268V56.5Q1268 64 1261 64.4Q1254 64 1254 56.5Z" fill="none" stroke="#4a4a4f" stroke-width="1.8" stroke-linejoin="round"/>
 <path d="M1257.6 56.3L1261 59.5L1264.4 56.3" fill="none" stroke="#4a4a4f" stroke-width="1.6"/>
 <path d="M1289 51.2L1291.2 55.9L1296.2 56.5L1292.5 59.9L1293.5 64.9L1289 62.4L1284.5 64.9L1285.5 59.9L1281.8 56.5L1286.8 55.9Z" fill="none" stroke="#4a4a4f" stroke-width="1.7" stroke-linejoin="round"/>
 <!-- right icons -->
 <path d="M1414 51.5V64.8M1417.6 52.6V64.8M1421.1 52.6V64.8M1422.6 52.6L1427.6 64.8" stroke="#3b3e43" stroke-width="1.7"/>
 <rect x="1445.2" y="52.2" width="14" height="12.3" rx="2" fill="none" stroke="#3b3e43" stroke-width="1.8"/>
 <path d="M1451.6 52.2V64.5M1447.3 54.8H1449.7M1447.3 56.8H1449.7M1447.3 58.8H1449.7" stroke="#3b3e43" stroke-width="1.1"/>
 <circle cx="1483.9" cy="58" r="6.6" fill="none" stroke="#3b3e43" stroke-width="1.3"/>
 <circle cx="1483.9" cy="55.9" r="2.3" fill="#3b3e43"/>
 <path d="M1479.6 60.8 Q1483.9 58.6 1488.2 60.8 Q1486.8 63 1483.9 63 Q1481 63 1479.6 60.8Z" fill="#3b3e43"/>
 <circle cx="1492.1" cy="51" r="3" fill="#0aa7f5"/>
 <path d="M1503.5 41.5V74.5" stroke="#d3d0cc" stroke-width="1"/>
 <path d="M1519.2 53H1530.8M1519.2 57.9H1530.8M1519.2 62.8H1530.8" stroke="#3b3e43" stroke-width="1.6"/>
</svg>
<div class="a" style="left:244px;top:12.5px;font-size:14.5px;color:#1f1f23;white-space:nowrap">JupyterLab</div>
<div class="a" style="left:468px;top:12px;width:165px;overflow:hidden;font-size:15px;color:#1f1f23;white-space:nowrap;-webkit-mask-image:linear-gradient(90deg,#000 80%,transparent)">Index of file:///x/libb/home/</div>
<div class="a" style="left:506px;top:49px;font-size:15.5px;color:#0c0c0d;white-space:nowrap">localhost<span style="color:#737373">:8888/lab</span></div>
<div class="a" style="left:1159px;top:50.5px;font-size:13px;color:#0c0c0d;white-space:nowrap">170%</div>

<!-- jupyter menu/sidebar/toolbar icons -->
<svg class="a" style="left:212px;top:79px" width="1332" height="970" viewBox="212 79 1332 970">
 <path d="M227.3 96.7Q239.9 79.5 253 96.7Q239.9 88.5 227.3 96.7Z" fill="#f37726"/>
 <path d="M227.3 107Q239.9 124.2 253 107Q239.9 115.2 227.3 107Z" fill="#f37726"/>
 <circle cx="250.1" cy="87" r="2.1" fill="#616161"/>
 <circle cx="227.6" cy="89.7" r="1.5" fill="#616161"/>
 <circle cx="229.7" cy="117.8" r="2.4" fill="#616161"/>
 <!-- sidebar -->
 <g fill="#616161">
  <path d="M225 162.5Q225 159.8 227.7 159.8H235.5L238.6 162.9H251.3Q254 162.9 254 165.6V179.6Q254 182.3 251.3 182.3H227.7Q225 182.3 225 179.6Z"/>
  <circle cx="239.4" cy="261" r="16.3"/>
  <rect x="233" y="255" width="13" height="12.4" fill="#eeeeee"/>
  <mask id="pim"><rect x="220" y="330" width="40" height="40" fill="#fff"/><circle cx="244.5" cy="343.2" r="8.6" fill="#000"/><path d="M247 349.5L254 356.5" stroke="#000" stroke-width="7"/></mask>
  <rect x="225.3" y="339.8" width="25.5" height="25.2" rx="2.2" mask="url(#pim)"/>
  <g fill="#eeeeee"><rect x="230.9" y="345.2" width="3.1" height="2.9"/><rect x="230.9" y="351.1" width="3.1" height="2.9"/><rect x="230.9" y="357" width="3.1" height="2.9"/><rect x="235" y="351.1" width="5" height="2.9"/><rect x="235" y="357" width="10" height="2.9"/></g>
  <path d="M228 342.6H234.8M228 362.6H248" stroke="#8a8a8a" stroke-width="0.8"/>
  <circle cx="244.5" cy="343.2" r="4.85" fill="none" stroke="#616161" stroke-width="2.9"/>
  <path d="M248 347L253 352" stroke="#616161" stroke-width="2.9"/>
  <path fill-rule="evenodd" d="M236.04 435.37L237.80 435.10L237.80 431.90L236.04 431.63L235.34 430.42L235.98 428.75L233.22 427.16L232.10 428.55L230.70 428.55L229.58 427.16L226.82 428.75L227.46 430.42L226.76 431.63L225.00 431.90L225.00 435.10L226.76 435.37L227.46 436.58L226.82 438.25L229.58 439.84L230.70 438.45L232.10 438.45L233.22 439.84L235.98 438.25L235.34 436.58ZM229.10 433.50a2.30 2.30 0 1 0 4.60 0a2.30 2.30 0 1 0 -4.60 0Z"/>
  <path fill-rule="evenodd" d="M246.03 439.35L245.75 436.56L241.25 436.56L240.97 439.35L238.74 440.63L236.19 439.48L233.94 443.38L236.21 445.02L236.21 447.58L233.94 449.22L236.19 453.12L238.74 451.97L240.97 453.25L241.25 456.04L245.75 456.04L246.03 453.25L248.26 451.97L250.81 453.12L253.06 449.22L250.79 447.58L250.79 445.02L253.06 443.38L250.81 439.48L248.26 440.63ZM239.90 446.30a3.60 3.60 0 1 0 7.20 0a3.60 3.60 0 1 0 -7.20 0Z"/>
  <rect x="224.9" y="520.7" width="29" height="22.8" rx="2" fill="none" stroke="#616161" stroke-width="2.5"/>
  <rect x="241" y="520.5" width="14" height="6.5"/>
  <path d="M225 612.8Q225 611 226.8 611H234.8Q234 606.7 238.6 606.7Q243 606.7 242.3 611H250.6Q252.4 611 252.4 612.8V618.6Q255.3 618.3 255.3 622.3Q255.3 626.3 252.4 626V634.3Q252.4 636.2 250.6 636.2H242.9Q243.4 631.6 239.3 631.6Q235.3 631.6 235.6 636.2H226.8Q225 636.2 225 634.3V626.7Q229.4 627.2 229.4 622.6Q229.4 618 225 618.7Z"/>
 </g>
 <circle cx="239" cy="488.2" r="0" fill="none"/>
 <!-- toolbar -->
 <g fill="#616161">
  <path d="M297.2 152.5Q297.2 150.4 299.3 150.4H314.2L318 154.2V168.9Q318 171 315.9 171H299.3Q297.2 171 297.2 168.9Z"/>
  <rect x="300.5" y="153.3" width="10.8" height="4.3" fill="#fff"/>
  <circle cx="307.5" cy="164.6" r="3.2" fill="#fff"/>
  <path d="M350.8 160.9H366.8M358.8 153.1V168.6" stroke="#616161" stroke-width="1.7"/>
  <circle cx="402" cy="153.3" r="3" fill="none" stroke="#616161" stroke-width="2"/>
  <circle cx="402" cy="167.6" r="3" fill="none" stroke="#616161" stroke-width="2"/>
  <path d="M404 155L421.5 171.5H417L405.5 158.5Z"/>
  <path d="M404 165.6L409.5 160L411.5 161.8L405.8 167.4Z"/>
  <path d="M410 158L418 149.3H421.5L412.2 159.6Z"/>
  <path d="M451.2 169.5V149.7H466" fill="none" stroke="#616161" stroke-width="2"/>
  <rect x="455" y="153.4" width="15.8" height="18.1" rx="1.3" fill="none" stroke="#616161" stroke-width="2"/>
  <rect x="503.6" y="150.6" width="18.2" height="20.4" rx="1.3" fill="none" stroke="#616161" stroke-width="2"/>
  <rect x="507.3" y="149" width="10.8" height="5.2"/>
  <circle cx="512.7" cy="148.6" r="2" fill="#616161"/>
  <circle cx="512.7" cy="148.8" r="0.8" fill="#fff"/>
  <path d="M560.1 152.8L572.4 160.7L560.1 168.6Z"/>
  <rect x="608.8" y="153.9" width="14" height="13.5"/>
  <path d="M674.6 156.2A8 8 0 1 0 675.8 164.8" fill="none" stroke="#616161" stroke-width="2"/>
  <path d="M677.3 151.6V159.6H669.3Z"/>
  <path d="M709.3 154L719.4 160.7L709.3 167.4ZM719.4 154L729.5 160.7L719.4 167.4Z"/>
  <path d="M903.9 157.8L910.6 164.6L917.3 157.8" fill="none" stroke="#616161" stroke-width="2"/>
 </g>
 <circle cx="1517.7" cy="159.5" r="10.3" fill="none" stroke="#616161" stroke-width="1.8"/>
 <!-- status bar icons -->
 <rect x="275.2" y="1014.5" width="25.7" height="25.5" fill="#424242"/>
 <g fill="#616161">
  <rect x="353.3" y="1017.6" width="15.6" height="16" rx="1.8" fill="none" stroke="#616161" stroke-width="2.3"/>
  <rect x="358.1" y="1022.8" width="5.9" height="5.2" fill="none" stroke="#616161" stroke-width="2"/>
  <path d="M358.4 1014v2.8M364 1014v2.8M358.4 1034.4v2.4M364 1034.4v2.4M349.4 1022.7h3M349.4 1027.6h3M369.8 1022.7h3M369.8 1027.6h3" stroke="#616161" stroke-width="2"/>
  <path d="M1109.5 1016.5L1121 1013.6L1132.5 1016.5V1022.5Q1132.5 1033 1121 1038Q1109.5 1033 1109.5 1022.5Z" fill="none" stroke="#555" stroke-width="2.4"/>
  <path d="M1116.8 1021.3L1125.2 1029.7M1125.2 1021.3L1116.8 1029.7" stroke="#555" stroke-width="2.3"/>
 </g>
</svg>
<div class="a" style="left:277.6px;top:1020.5px;font-size:15.5px;line-height:1;color:#eeeeee;font-family:'Liberation Sans'">$<span style="display:inline-block;width:7px;height:2.6px;background:#eeeeee;margin-left:1.5px;vertical-align:-1.8px"></span></div>

<!-- menu text -->
<div class="a" style="top:90.9px;font-size:25.5px;line-height:1;color:#000;white-space:nowrap">
 <span class="a" style="left:279px">File</span>
 <span class="a" style="left:348px">Edit</span>
 <span class="a" style="left:421px">View</span>
 <span class="a" style="left:504px">Run</span>
 <span class="a" style="left:579px">Kernel</span>
 <span class="a" style="left:683px">Tabs</span>
 <span class="a" style="left:765.5px">Settings</span>
 <span class="a" style="left:887px">Help</span>
</div>
<div class="a" style="left:770px;top:146.8px;font-size:23.9px;line-height:1;color:#000;white-space:nowrap">Code</div>
<div class="a" style="left:1379.5px;top:147.5px;font-size:24.2px;line-height:1;color:#000;white-space:nowrap">Julia 1.5.2</div>

<!-- markdown -->
<div class="a" style="left:436px;top:205.1px;font-size:24.4px;line-height:1;color:#000;white-space:nowrap">Draw a contour graph, level curves, to look at the function f.</div>
<svg class="a" style="left:800px;top:230px" width="300" height="50" viewBox="800 230 300 50" font-family="Liberation Serif" fill="#000">
 <text x="834" y="264" font-size="32" font-style="italic" textLength="17" lengthAdjust="spacingAndGlyphs">f</text>
 <text x="855" y="264" font-size="31.5">(</text>
 <text x="865.5" y="264.3" font-size="33" font-style="italic" textLength="16.5" lengthAdjust="spacingAndGlyphs">x</text>
 <text x="884.3" y="268.9" font-size="23.5">1</text>
 <text x="897.6" y="264" font-size="33">,</text>
 <text x="911.5" y="264.3" font-size="33" font-style="italic" textLength="16.5" lengthAdjust="spacingAndGlyphs">x</text>
 <text x="929.3" y="268.9" font-size="23.5">2</text>
 <text x="942.5" y="264" font-size="31.5">)</text>
 <rect x="965" y="252.1" width="19.2" height="1.9"/><rect x="965" y="258.1" width="19.2" height="1.9"/>
 <text x="996" y="263.9" font-size="32.5" textLength="68.5" lengthAdjust="spacingAndGlyphs">const</text>
</svg>

<!-- cells -->
<div class="a" style="left:427px;top:304px;width:1070px;height:77px;background:#f5f5f5;border:1px solid #e0e0e0"></div>
<div class="a" style="left:435px;top:313px;width:1054px;height:29px;background:#d9d9d9"></div>
<div class="a" style="left:435px;top:342px;width:228px;height:29px;background:#d9d9d9"></div>
<div class="a" style="left:427px;top:398px;width:1070px;height:48px;background:#f5f5f5;border:1px solid #e0e0e0"></div>
<div class="a" style="left:435px;top:408px;width:739px;height:29px;background:#d9d9d9"></div>
<div class="a mono" id="code" style="font-size:22.35px;line-height:29.1px;white-space:pre;color:#000">
<style>.o{color:#aa22ff;font-weight:bold}.n{color:#008000}.pr{color:#a0a0a0}</style>
 <div class="a" style="left:435px;top:314.6px">x1<span class="o">=</span>[<span class="o">-</span><span class="n">10</span><span class="o">:</span><span class="n">0.1</span><span class="o">:</span><span class="n">10</span>;];</div>
 <div class="a" style="left:435px;top:343.7px">x2<span class="o">=</span>[<span class="o">-</span><span class="n">10</span><span class="o">:</span><span class="n">0.1</span><span class="o">:</span><span class="n">10</span>;];</div>
 <div class="a" style="left:435px;top:410px"><span class="n">contour</span>(x1,x2,(a,b)<span class="o">-&gt;</span><span class="n">f</span>([a,b]),levels<span class="o">=</span><span class="n">30</span>,size<span class="o">=</span>[<span class="n">300</span>,<span class="n">300</span>])</div>
 <div class="a pr" style="left:349.5px;top:313.1px">[20]:</div>
 <div class="a pr" style="left:349.5px;top:408.5px">[29]:</div>
 <div class="a pr" style="left:349.5px;top:465.9px">[29]:</div>
</div>
<div class="a" style="left:427px;top:993px;width:1070px;height:1px;background:#e0e0e0"></div>

<!-- status text -->
<div class="a" style="top:1013.9px;font-size:24.3px;line-height:1;color:#000;white-space:nowrap">
 <span class="a" style="left:242px">0</span>
 <span class="a" style="left:316.5px">2</span>
 <span class="a" style="left:405px">Julia 1.5.2 | Idle</span>
 <span class="a" style="left:634px">Saving completed</span>
 <span class="a" style="left:890px">Mode: Command</span>
 <span class="a" style="left:1163.5px">Ln 1, Col 1</span>
 <span class="a" style="left:1307px">leastsquares.ipynb</span>
</div>

<svg class="a" style="left:0;top:0" width="1680" height="1050" viewBox="0 0 1680 1050">
<defs><clipPath id="pc"><rect x="495.10" y="475.00" width="375.20" height="438.80"/></clipPath></defs>
<path d="M588.90 475.00V913.80M682.70 475.00V913.80M776.50 475.00V913.80M870.30 475.00V913.80M495.10 804.10H870.30M495.10 694.40H870.30M495.10 584.70H870.30M495.10 475.00H870.30" stroke="#000" stroke-opacity="0.07" stroke-width="1" fill="none"/>
<g clip-path="url(#pc)" fill="none" stroke-width="1.9">
<ellipse cx="758.02" cy="674.30" rx="65.30" ry="30.13" transform="rotate(-134.263 758.02 674.30)" stroke="#040312"/>
<ellipse cx="758.02" cy="674.30" rx="97.56" ry="45.02" transform="rotate(-134.263 758.02 674.30)" stroke="#0b0724"/>
<ellipse cx="758.02" cy="674.30" rx="125.56" ry="57.94" transform="rotate(-134.263 758.02 674.30)" stroke="#150b37"/>
<ellipse cx="758.02" cy="674.30" rx="151.67" ry="69.99" transform="rotate(-134.263 758.02 674.30)" stroke="#230c4c"/>
<ellipse cx="758.02" cy="674.30" rx="176.73" ry="81.55" transform="rotate(-134.263 758.02 674.30)" stroke="#310a5c"/>
<ellipse cx="758.02" cy="674.30" rx="201.14" ry="92.82" transform="rotate(-134.263 758.02 674.30)" stroke="#3e0966"/>
<ellipse cx="758.02" cy="674.30" rx="225.10" ry="103.88" transform="rotate(-134.263 758.02 674.30)" stroke="#4c0c6b"/>
<ellipse cx="758.02" cy="674.30" rx="248.75" ry="114.79" transform="rotate(-134.263 758.02 674.30)" stroke="#5a116e"/>
<ellipse cx="758.02" cy="674.30" rx="272.17" ry="125.60" transform="rotate(-134.263 758.02 674.30)" stroke="#67166e"/>
<ellipse cx="758.02" cy="674.30" rx="295.41" ry="136.32" transform="rotate(-134.263 758.02 674.30)" stroke="#741a6e"/>
<ellipse cx="758.02" cy="674.30" rx="318.52" ry="146.98" transform="rotate(-134.263 758.02 674.30)" stroke="#801f6c"/>
<ellipse cx="758.02" cy="674.30" rx="341.51" ry="157.59" transform="rotate(-134.263 758.02 674.30)" stroke="#8f2469"/>
<ellipse cx="758.02" cy="674.30" rx="364.41" ry="168.16" transform="rotate(-134.263 758.02 674.30)" stroke="#9b2964"/>
<ellipse cx="758.02" cy="674.30" rx="387.24" ry="178.70" transform="rotate(-134.263 758.02 674.30)" stroke="#a82e5f"/>
<ellipse cx="758.02" cy="674.30" rx="410.01" ry="189.20" transform="rotate(-134.263 758.02 674.30)" stroke="#b43359"/>
<ellipse cx="758.02" cy="674.30" rx="432.72" ry="199.69" transform="rotate(-134.263 758.02 674.30)" stroke="#c13a50"/>
<ellipse cx="758.02" cy="674.30" rx="455.40" ry="210.15" transform="rotate(-134.263 758.02 674.30)" stroke="#cc4248"/>
<ellipse cx="758.02" cy="674.30" rx="478.03" ry="220.59" transform="rotate(-134.263 758.02 674.30)" stroke="#d74b3f"/>
<ellipse cx="758.02" cy="674.30" rx="500.63" ry="231.02" transform="rotate(-134.263 758.02 674.30)" stroke="#e05536"/>
<ellipse cx="758.02" cy="674.30" rx="523.21" ry="241.44" transform="rotate(-134.263 758.02 674.30)" stroke="#e9612b"/>
<ellipse cx="758.02" cy="674.30" rx="545.75" ry="251.84" transform="rotate(-134.263 758.02 674.30)" stroke="#ef6e21"/>
<ellipse cx="758.02" cy="674.30" rx="568.28" ry="262.24" transform="rotate(-134.263 758.02 674.30)" stroke="#f57b17"/>
<ellipse cx="758.02" cy="674.30" rx="590.79" ry="272.63" transform="rotate(-134.263 758.02 674.30)" stroke="#f8890c"/>
<ellipse cx="758.02" cy="674.30" rx="613.28" ry="283.00" transform="rotate(-134.263 758.02 674.30)" stroke="#fb9906"/>
<ellipse cx="758.02" cy="674.30" rx="635.76" ry="293.38" transform="rotate(-134.263 758.02 674.30)" stroke="#fca80d"/>
<ellipse cx="758.02" cy="674.30" rx="658.22" ry="303.74" transform="rotate(-134.263 758.02 674.30)" stroke="#fbb81d"/>
<ellipse cx="758.02" cy="674.30" rx="680.67" ry="314.10" transform="rotate(-134.263 758.02 674.30)" stroke="#f9c72f"/>
<ellipse cx="758.02" cy="674.30" rx="703.10" ry="324.45" transform="rotate(-134.263 758.02 674.30)" stroke="#f5d949"/>
<ellipse cx="758.02" cy="674.30" rx="725.53" ry="334.80" transform="rotate(-134.263 758.02 674.30)" stroke="#f2e865"/>
<ellipse cx="758.02" cy="674.30" rx="747.95" ry="345.15" transform="rotate(-134.263 758.02 674.30)" stroke="#f3f586"/>
</g>
<path d="M495.10 475.00V913.80H870.30" stroke="#000" stroke-width="1.8" fill="none"/>
<path d="M495.10 913.80v-5M495.10 913.80h5M588.90 913.80v-5M495.10 804.10h5M682.70 913.80v-5M495.10 694.40h5M776.50 913.80v-5M495.10 584.70h5M870.30 913.80v-5M495.10 475.00h5" stroke="#000" stroke-width="1.5" fill="none"/>
<path d="M880 900.34H895" stroke="#040312" stroke-width="1.9"/>
<path d="M880 886.17H895" stroke="#0b0724" stroke-width="1.9"/>
<path d="M880 872.01H895" stroke="#150b37" stroke-width="1.9"/>
<path d="M880 857.84H895" stroke="#230c4c" stroke-width="1.9"/>
<path d="M880 843.68H895" stroke="#310a5c" stroke-width="1.9"/>
<path d="M880 829.51H895" stroke="#3e0966" stroke-width="1.9"/>
<path d="M880 815.35H895" stroke="#4c0c6b" stroke-width="1.9"/>
<path d="M880 801.18H895" stroke="#5a116e" stroke-width="1.9"/>
<path d="M880 787.02H895" stroke="#67166e" stroke-width="1.9"/>
<path d="M880 772.85H895" stroke="#741a6e" stroke-width="1.9"/>
<path d="M880 758.69H895" stroke="#801f6c" stroke-width="1.9"/>
<path d="M880 744.53H895" stroke="#8f2469" stroke-width="1.9"/>
<path d="M880 730.36H895" stroke="#9b2964" stroke-width="1.9"/>
<path d="M880 716.20H895" stroke="#a82e5f" stroke-width="1.9"/>
<path d="M880 702.03H895" stroke="#b43359" stroke-width="1.9"/>
<path d="M880 687.87H895" stroke="#c13a50" stroke-width="1.9"/>
<path d="M880 673.70H895" stroke="#cc4248" stroke-width="1.9"/>
<path d="M880 659.54H895" stroke="#d74b3f" stroke-width="1.9"/>
<path d="M880 645.37H895" stroke="#e05536" stroke-width="1.9"/>
<path d="M880 631.21H895" stroke="#e9612b" stroke-width="1.9"/>
<path d="M880 617.05H895" stroke="#ef6e21" stroke-width="1.9"/>
<path d="M880 602.88H895" stroke="#f57b17" stroke-width="1.9"/>
<path d="M880 588.72H895" stroke="#f8890c" stroke-width="1.9"/>
<path d="M880 574.55H895" stroke="#fb9906" stroke-width="1.9"/>
<path d="M880 560.39H895" stroke="#fca80d" stroke-width="1.9"/>
<path d="M880 546.22H895" stroke="#fbb81d" stroke-width="1.9"/>
<path d="M880 532.06H895" stroke="#f9c72f" stroke-width="1.9"/>
<path d="M880 517.89H895" stroke="#f5d949" stroke-width="1.9"/>
<path d="M880 503.73H895" stroke="#f2e865" stroke-width="1.9"/>
<path d="M880 489.56H895" stroke="#f3f586" stroke-width="1.9"/>
<path d="M895.50 475.40V914.50" stroke="#000" stroke-width="1.8"/>
<path d="M895.50 866.82h5M895.50 816.09h5M895.50 765.36h5M895.50 714.63h5M895.50 663.90h5M895.50 613.17h5M895.50 562.44h5M895.50 511.71h5" stroke="#000" stroke-width="1.5"/>
<g font-family="Liberation Sans" font-size="21.5" fill="#000">
<text x="902" y="867.32" dominant-baseline="central">5.0</text>
<text x="902" y="816.59" dominant-baseline="central">7.5</text>
<text x="902" y="765.86" dominant-baseline="central">10.0</text>
<text x="902" y="715.13" dominant-baseline="central">12.5</text>
<text x="902" y="664.40" dominant-baseline="central">15.0</text>
<text x="902" y="613.67" dominant-baseline="central">17.5</text>
<text x="902" y="562.94" dominant-baseline="central">20.0</text>
<text x="902" y="512.21" dominant-baseline="central">22.5</text>
<text x="495.10" y="937" text-anchor="middle">−10</text>
<text x="488" y="914.30" text-anchor="end" dominant-baseline="central">−10</text>
<text x="588.90" y="937" text-anchor="middle">−5</text>
<text x="488" y="804.60" text-anchor="end" dominant-baseline="central">−5</text>
<text x="682.70" y="937" text-anchor="middle">0</text>
<text x="488" y="694.90" text-anchor="end" dominant-baseline="central">0</text>
<text x="776.50" y="937" text-anchor="middle">5</text>
<text x="488" y="585.20" text-anchor="end" dominant-baseline="central">5</text>
<text x="870.30" y="937" text-anchor="middle">10</text>
<text x="488" y="475.50" text-anchor="end" dominant-baseline="central">10</text>
</g></svg>
</body></html>
